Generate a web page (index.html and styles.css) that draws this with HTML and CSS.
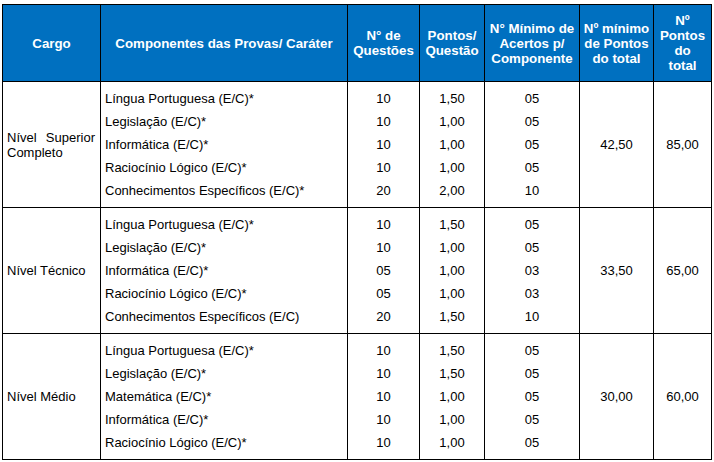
FILE: index.html
```html
<!DOCTYPE html>
<html lang="pt">
<head>
<meta charset="utf-8">
<title>Quadro de Provas</title>
<link rel="stylesheet" href="styles.css">
</head>
<body>
<div class="page">
<table class="provas">
  <colgroup>
    <col class="c-cargo"><col class="c-comp"><col class="c-q"><col class="c-p"><col class="c-min"><col class="c-mint"><col class="c-tot">
  </colgroup>
  <thead>
    <tr>
      <th>Cargo</th>
      <th>Componentes das Provas/ Caráter</th>
      <th>N° de Questões</th>
      <th>Pontos/ Questão</th>
      <th>N° Mínimo de Acertos p/ Componente</th>
      <th>Nº mínimo de Pontos do total</th>
      <th class="narrow">Nº Pontos do total</th>
    </tr>
  </thead>
  <tbody>
    <tr class="first">
      <td rowspan="5" class="cargo justify">Nível Superior Completo</td>
      <td class="comp">Língua Portuguesa (E/C)*</td><td>10</td><td>1,50</td><td>05</td>
      <td rowspan="5" class="span">42,50</td><td rowspan="5" class="span">85,00</td>
    </tr>
    <tr><td class="comp">Legislação (E/C)*</td><td>10</td><td>1,00</td><td>05</td></tr>
    <tr><td class="comp">Informática (E/C)*</td><td>10</td><td>1,00</td><td>05</td></tr>
    <tr><td class="comp">Raciocínio Lógico (E/C)*</td><td>10</td><td>1,00</td><td>05</td></tr>
    <tr class="last"><td class="comp">Conhecimentos Específicos (E/C)*</td><td>20</td><td>2,00</td><td>10</td></tr>

    <tr class="first">
      <td rowspan="5" class="cargo">Nível Técnico</td>
      <td class="comp">Língua Portuguesa (E/C)*</td><td>10</td><td>1,50</td><td>05</td>
      <td rowspan="5" class="span">33,50</td><td rowspan="5" class="span">65,00</td>
    </tr>
    <tr><td class="comp">Legislação (E/C)*</td><td>10</td><td>1,00</td><td>05</td></tr>
    <tr><td class="comp">Informática (E/C)*</td><td>05</td><td>1,00</td><td>03</td></tr>
    <tr><td class="comp">Raciocínio Lógico (E/C)*</td><td>05</td><td>1,00</td><td>03</td></tr>
    <tr class="last"><td class="comp">Conhecimentos Específicos (E/C)</td><td>20</td><td>1,50</td><td>10</td></tr>

    <tr class="first">
      <td rowspan="5" class="cargo">Nível Médio</td>
      <td class="comp">Língua Portuguesa (E/C)*</td><td>10</td><td>1,50</td><td>05</td>
      <td rowspan="5" class="span">30,00</td><td rowspan="5" class="span">60,00</td>
    </tr>
    <tr><td class="comp">Legislação (E/C)*</td><td>10</td><td>1,50</td><td>05</td></tr>
    <tr><td class="comp">Matemática (E/C)*</td><td>10</td><td>1,00</td><td>05</td></tr>
    <tr><td class="comp">Informática (E/C)*</td><td>10</td><td>1,00</td><td>05</td></tr>
    <tr class="last"><td class="comp">Raciocínio Lógico (E/C)*</td><td>10</td><td>1,00</td><td>05</td></tr>
  </tbody>
</table>
</div>
</body>
</html>
```

FILE: styles.css
```css
html, body {
  margin: 0;
  padding: 0;
  background: #ffffff;
}

.page {
  padding: 4px 3px 0 2px;
}

.provas {
  width: 709px;
  border-collapse: collapse;
  table-layout: fixed;
  font-family: "Liberation Sans", Arial, sans-serif;
  font-size: 13px;
  color: #000000;
  border: 1px solid #000000;
}

.c-cargo { width: 98px; }
.c-comp { width: 247px; }
.c-q { width: 72px; }
.c-p { width: 65px; }
.c-min { width: 95px; }
.c-mint { width: 74px; }
.c-tot { width: 58px; }

.provas th {
  background: #0070c0;
  color: #ffffff;
  font-weight: bold;
  font-size: 13.3px;
  line-height: 15px;
  height: 76px;
  padding: 0 3px;
  border: 1px solid #000000;
  vertical-align: middle;
  text-align: center;
}

.provas th.narrow {
  padding: 0 6px;
}

.provas td {
  border-left: 1px solid #000000;
  border-right: 1px solid #000000;
  padding: 0 4px;
  height: 23px;
  line-height: 23px;
  text-align: center;
  vertical-align: middle;
}

.provas tr.first td {
  border-top: 1px solid #000000;
}

.provas tr.first td:not(.cargo):not(.span) {
  padding-top: 5px;
}

.provas tr.last td {
  padding-bottom: 5px;
}

.provas td.comp {
  text-align: left;
  padding-left: 4px;
}

.provas td.cargo {
  text-align: left;
  line-height: 15px;
  padding: 0 5px 0 4px;
}

.provas td.justify {
  text-align: justify;
}
```
